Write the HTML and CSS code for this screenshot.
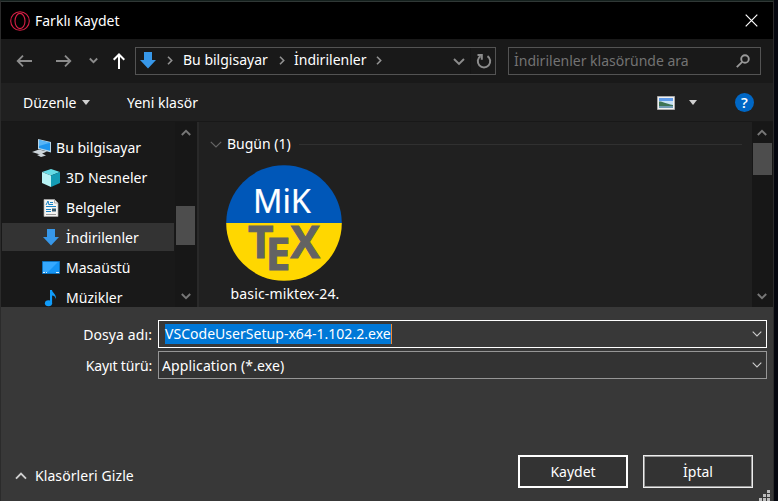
FILE: index.html
```html
<!DOCTYPE html>
<html lang="tr">
<head>
<meta charset="utf-8">
<title>Farklı Kaydet</title>
<link rel="stylesheet" href="styles.css">
</head>
<body>
<div class="dialog">
  <header class="titlebar">
    <svg class="opera" width="20" height="20" viewBox="0 0 20 20" fill="none" stroke="#d61f45" stroke-width="1.1"><circle cx="10" cy="10" r="9.3"/><ellipse cx="10" cy="10" rx="5" ry="7.6"/></svg>
    <h1 class="title">Farklı Kaydet</h1>
    <svg class="close" width="13" height="13" viewBox="0 0 13 13" stroke="#fff" stroke-width="1.2"><path d="M.7.7l11.6 11.6M12.3.7L.7 12.3"/></svg>
  </header>

  <nav class="navbar">
    <svg class="arrows" width="134" height="44" viewBox="0 0 134 44" fill="none" stroke="#8c8c8c" stroke-width="1.8">
      <path d="M31 22H16.5M22 16.7L16.7 22l5.3 5.3M55 22h14.5M64 16.7l5.3 5.3-5.3 5.3"/>
      <path d="M88.800 19.500l3.700 3.700 3.700-3.700"/>
      <path stroke="#fff" stroke-width="2" d="M118 30V16M112.700 20.800L118 15.500l5.300 5.300"/>
    </svg>
    <div class="address">
      <svg class="down-icon" width="16" height="17" viewBox="0 0 16 17"><path fill="#3797e8" d="M4 0h8v8h4l-8 8.500L0 8h4z"/></svg>
      <svg class="sep" width="6" height="9" viewBox="0 0 6 9"><path d="M1 .7l3.700 3.800L1 8.300"/></svg>
      <span class="crumb computer">Bu bilgisayar</span>
      <svg class="sep second" width="6" height="9" viewBox="0 0 6 9"><path d="M1 .7l3.700 3.800L1 8.300"/></svg>
      <span class="crumb downloads">İndirilenler</span>
      <svg class="sep third" width="6" height="9" viewBox="0 0 6 9"><path d="M1 .7l3.700 3.800L1 8.300"/></svg>
      <div class="address-tools">
        <svg class="history" width="12" height="8" viewBox="0 0 12 8" fill="none" stroke="#8c8c8c" stroke-width="1.9"><path d="M1 1l5 5 5-5"/></svg>
        <i class="divider"></i>
        <svg width="16" height="17" viewBox="0 0 16 17" fill="none" stroke="#8c8c8c" stroke-width="2"><path d="M11.500 3.100A6.200 6.200 0 1 1 4.500 3.100"/><path d="M1.500 2h4.300v4.800"/></svg>
      </div>
    </div>
    <div class="search">
      <span class="placeholder">İndirilenler klasöründe ara</span>
      <svg width="14" height="14" viewBox="0 0 14 14" fill="none" stroke="#999" stroke-width="1.9"><circle cx="9" cy="5" r="3.800"/><path d="M6.200 7.800L.8 13.200"/></svg>
    </div>
  </nav>

  <div class="toolbar">
    <span class="organize">Düzenle</span>
    <i class="triangle"></i>
    <span class="new-folder">Yeni klasör</span>
    <div class="toolbar-right">
      <svg width="18" height="14" viewBox="0 0 18 14"><path fill="#f1f1f1" stroke="#aaa" d="M.5.500h17v13H.5z"/><path fill="#5f9bea" d="M2 2h14v4H2z"/><path fill="#c8e2f6" d="M2 5h14v4H2z"/><path fill="#3e7456" d="M2 5.500c4 0 6 2 14 3.500v1H2z"/><path fill="#6f9ab5" d="M2 10h14v2H2z"/></svg>
      <i class="triangle views"></i>
      <span class="help">?</span>
    </div>
  </div>

  <main class="content">
    <ul class="tree">
      <li class="node root"><svg class="icon" width="20" height="18" viewBox="0 0 20 18"><path fill="#b9d6e8" d="M6 0l13 3v10.500L6 10z"/><path fill="#1f95ee" d="M7 1l11 2.800v8L7 9z"/><path fill="#58b5f7" d="M7 1l11 2.800L7 7z"/><path fill="#ccd4d9" d="M0 13l7-2.500 8 2L8 15.500zM5 16l5-1.500 4 2-5 1.500z"/></svg><span>Bu bilgisayar</span></li>
      <li class="node objects"><svg class="icon" width="18" height="18" viewBox="0 0 18 18"><path fill="#65dbe5" d="M0 3l9-3 9 3-9 3.500z"/><path fill="#b8f3f5" d="M0 3l9 3.500V18l-9-4z"/><path fill="#149cb5" d="M18 3L9 6.500V18l9-4z"/></svg><span>3D Nesneler</span></li>
      <li class="node docs"><svg class="icon" width="18" height="18" viewBox="0 0 18 18"><path fill="#f4f4f2" stroke="#aaa" stroke-width=".7" d="M2 .5h10.500L16 4v13.500H2z"/><path fill="none" stroke="#999" stroke-width=".8" d="M12.500.5V4H16"/><path stroke="#1782c5" d="M8 3.500h3M7 5.500h4M4 7.500h10M4 10.500h5M4 12.500h5"/><path stroke="#999" d="M4 15.500h10"/><path fill="#345a70" d="M10 9.500h4v3h-4z"/><path fill="none" stroke="#1782c5" d="M4 6l2-4 1 4"/></svg><span>Belgeler</span></li>
      <li class="node selected"><svg class="icon" width="18" height="17" viewBox="0 0 18 17"><path fill="#3797e8" d="M5 0h8v8h4l-8 8.500L1 8h4z"/></svg><span>İndirilenler</span></li>
      <li class="node desktop"><svg class="icon" width="18" height="13" viewBox="0 0 18 13"><path fill="#1595f5" stroke="#0877cb" stroke-width=".8" d="M.4.400h17.200v12.200H.4z"/><path fill="#35a9ff" d="M1 1h15L6 11H1z"/><path stroke="#d8efff" d="M1 11.500h2M4 11.500h1M14 11.500h3"/></svg><span>Masaüstü</span></li>
      <li class="node music"><svg class="icon" width="18" height="18" viewBox="0 0 18 18"><ellipse cx="6.500" cy="14.300" rx="3.600" ry="3" fill="#109cfa"/><path fill="#109cfa" d="M8 1h2c.3 3 4.500 4 4 9-1-2.500-2-3.400-3.900-3.500V14H8z"/></svg><span>Müzikler</span></li>
    </ul>
    <div class="scroll tree-scroll">
      <svg class="chev" width="10" height="7" viewBox="0 0 10 7"><path d="M.8 6L5 1.800 9.200 6"/></svg>
      <i class="thumb"></i>
      <svg class="chev bottom" width="10" height="7" viewBox="0 0 10 7"><path d="M.8 1L5 5.200 9.200 1"/></svg>
    </div>
    <section class="files">
      <div class="group"><svg width="12" height="7" viewBox="0 0 12 7" fill="none" stroke="#666" stroke-width="1.200"><path d="M.8.800L6 6 11.200.8"/></svg><span>Bugün (1)</span><i class="rule"></i></div>
      <figure class="file">
        <svg width="116" height="116" viewBox="0 0 116 116" font-family="Noto Sans, sans-serif"><path fill="#0057b8" d="M.2 58a57.800 57.800 0 0 1 115.600 0z"/><path fill="#ffd700" d="M.2 58a57.800 57.800 0 0 0 115.600 0z"/>
          <text x="27" y="48" font-size="32" textLength="58" lengthAdjust="spacingAndGlyphs" fill="#fff" stroke="#fff" stroke-width=".2">MiK</text>
          <text fill="#636363" stroke="#636363" stroke-width="1" font-weight="700" font-family="Open Sans, sans-serif" font-size="44"><tspan x="22" y="92.500">T</tspan><tspan x="39.800" y="104.800">E</tspan><tspan x="64.500" y="92.500">X</tspan></text></svg>
        <figcaption>basic-miktex-24.</figcaption>
      </figure>
    </section>
    <div class="scroll file-scroll">
      <svg class="chev" width="10" height="7" viewBox="0 0 10 7"><path d="M.8 6L5 1.800 9.200 6"/></svg>
      <i class="thumb"></i>
      <svg class="chev bottom" width="10" height="7" viewBox="0 0 10 7"><path d="M.8 1L5 5.200 9.200 1"/></svg>
    </div>
  </main>

  <footer class="bottom-panel">
    <div class="field name-field"><span class="label name-label">Dosya adı:</span><div class="box"><span class="value">VSCodeUserSetup-x64-1.102.2.exe</span><svg width="10" height="6" viewBox="0 0 10 6"><path d="M.7.700L5 5 9.300.7"/></svg></div></div>
    <div class="field type-field"><span class="label type-label">Kayıt türü:</span><div class="box"><span class="value">Application (*.exe)</span><svg width="10" height="6" viewBox="0 0 10 6"><path d="M.7.700L5 5 9.300.7"/></svg></div></div>
    <div class="actions">
      <svg class="up" width="12" height="8" viewBox="0 0 12 8" fill="none" stroke="#d0d0d0" stroke-width="1.900"><path d="M1 6.700L6 1.700l5 5"/></svg>
      <span class="hide">Klasörleri Gizle</span>
      <button class="btn save"><span>Kaydet</span></button>
      <button class="btn cancel"><span>İptal</span></button>
    </div>
    <svg class="grip" width="11" height="11" viewBox="0 0 11 11" fill="#bdbdbd"><path d="M8 0h3v3H8zM4 4h3v3H4zM8 4h3v3H8zM0 8h3v3H0zM4 8h3v3H4zM8 8h3v3H8z"/></svg>
  </footer>
</div>
</body>
</html>
```
FILE: styles.css
```css
* { box-sizing: border-box; }
body {
  margin: 0;
  width: 778px;
  height: 501px;
  overflow: hidden;
  background: #05070f;
  color: #fff;
  font: 14px/20px "Noto Sans", "Open Sans", sans-serif;
  white-space: nowrap;
}
svg, i { display: block; flex: none; }
.dialog {
  width: 774px;
  height: 501px;
  display: flex;
  flex-direction: column;
  border-left: 1px solid #2b2b2b;
  border-right: 1px solid #2b2b2b;
  border-top: 1px solid #14201d;
}
.titlebar {
  height: 38px;
  flex: none;
  display: flex;
  align-items: center;
  background: #000;
  border-top: 1px solid #303836;
  padding: 0 15px 0 9px;
}
.title { margin: 0 0 0 5px; font-size: 14px; font-weight: 400; }
.close { margin-left: auto; }
.navbar { height: 44px; flex: none; display: flex; align-items: center; background: #191919; }
.address, .search { height: 28px; border: 1px solid #535353; display: flex; align-items: center; }
.address { width: 361px; padding: 0 0 2px 4px; }
.sep { fill: none; stroke: #929292; stroke-width: 1.6; margin-left: 11px; }
.crumb { margin-left: 10px; }
.computer { width: 85px; }
.downloads { width: 71px; }
.sep.second { margin-left: 11px; }
.crumb.downloads { margin-left: 9px; }
.address-tools { margin-left: auto; display: flex; align-items: center; padding: 2px 3px 0 0; }
.divider { width: 1px; height: 26px; background: #151515; margin: 0 5px; }
.history { margin-top: 1px; }
.search { width: 253px; margin-left: 12px; padding: 0 10px 0 5px; color: #737373; }
.search svg { margin: 0 0 0 auto; }
.toolbar { height: 39px; flex: none; display: flex; align-items: center; background: #202020; border-bottom: 1px solid #181818; padding: 1px 19px 0 22px; }
.organize { width: 55px; }
.triangle { border: 4px solid transparent; border-top: 5px solid #d0d0d0; border-bottom: 0; margin-left: 4px; }
.new-folder { margin-left: 37px; }
.toolbar-right { margin-left: auto; display: flex; align-items: center; }
.views { margin-left: 14px; }
.help { margin-left: 38px; width: 19px; height: 19px; border-radius: 50%; background: #0067c5; font: 600 15px/19px "Open Sans", sans-serif; text-align: center; }
.content { height: 185px; flex: none; display: flex; background: #202020; overflow: hidden; }
.tree { list-style: none; margin: 0; padding: 10px 0 0 1px; width: 174px; background: #191919; overflow: hidden; }
.node { height: 30px; width: 172px; padding: 1px 0 0 40px; display: flex; align-items: center; gap: 6px; }
.root { padding-left: 30px; gap: 4px; }
.selected { background: #333; height: 28px; margin: 1px 0; }
.node span { padding-top: 1px; letter-spacing: .03px; }
.scroll { background: #171717; display: flex; flex-direction: column; }
.tree-scroll { width: 24px; padding: 7px 2px 7px 1px; border-right: 2px solid #292929; }
.chev { align-self: center; fill: none; stroke: #777; stroke-width: 1.9; }
.bottom { margin-top: auto; }
.thumb { background: #4d4d4d; width: 19px; }
.tree-scroll .thumb { height: 39px; margin: 70px 0 0 0; }
.file-scroll { width: 21px; padding: 7px 0 7px 1px; }
.file-scroll .chev { margin-right: 2px; }
.file-scroll .thumb { height: 32px; margin-top: 7px; }
.files { flex: 1; padding: 12px 10px 0 11px; }
.group { display: flex; align-items: center; height: 20px; }
.group span { width: 66px; margin-left: 5px; }
.rule { flex: 1; height: 1px; background: #303030; margin-left: 6px; }
.file { margin: 11px 0 0 16px; width: 118px; }
figcaption { text-align: center; line-height: 20px; margin-top: 3px; letter-spacing: .15px; }
.bottom-panel { flex: 1; background: #383838; padding-top: 13px; position: relative; }
.field { display: flex; height: 28px; margin: 0 0 3px; padding-right: 6px; }
.label { width: 151px; text-align: right; line-height: 30px; margin-right: 6px; letter-spacing: .1px; }
.type-label { letter-spacing: -.15px; }
.box { flex: 1; border: 1px solid #969696; background: #333; display: flex; align-items: center; padding: 0 4px 0 3px; }
.box svg { margin-left: auto; fill: none; stroke: #ccc; stroke-width: 1.1; }
.type-field .value { padding-top: 1px; letter-spacing: .13px; }
.name-field .box { border-color: #fff; background: #383838; padding-left: 6px; }
.name-field .value { background: #0078d7; height: 20px; line-height: 20px; margin-bottom: 1px; width: 227px; letter-spacing: .03px; border-right: 1px solid #f08a35; }
.actions { display: flex; align-items: center; margin-top: 76px; height: 33px; padding: 0 20px 0 14px; }
.hide { margin: 8px auto 0 8px; letter-spacing: .08px; }
.up { margin-top: 8px; }
.btn { width: 110px; height: 33px; padding: 0; border: 2px solid #fff; background: #333; color: #fff; font: inherit; }
.cancel { margin-left: 15px; border: 1px solid #eee; box-shadow: inset 0 0 0 1px #999; }
.grip { position: absolute; right: 3px; bottom: 0; }
```
